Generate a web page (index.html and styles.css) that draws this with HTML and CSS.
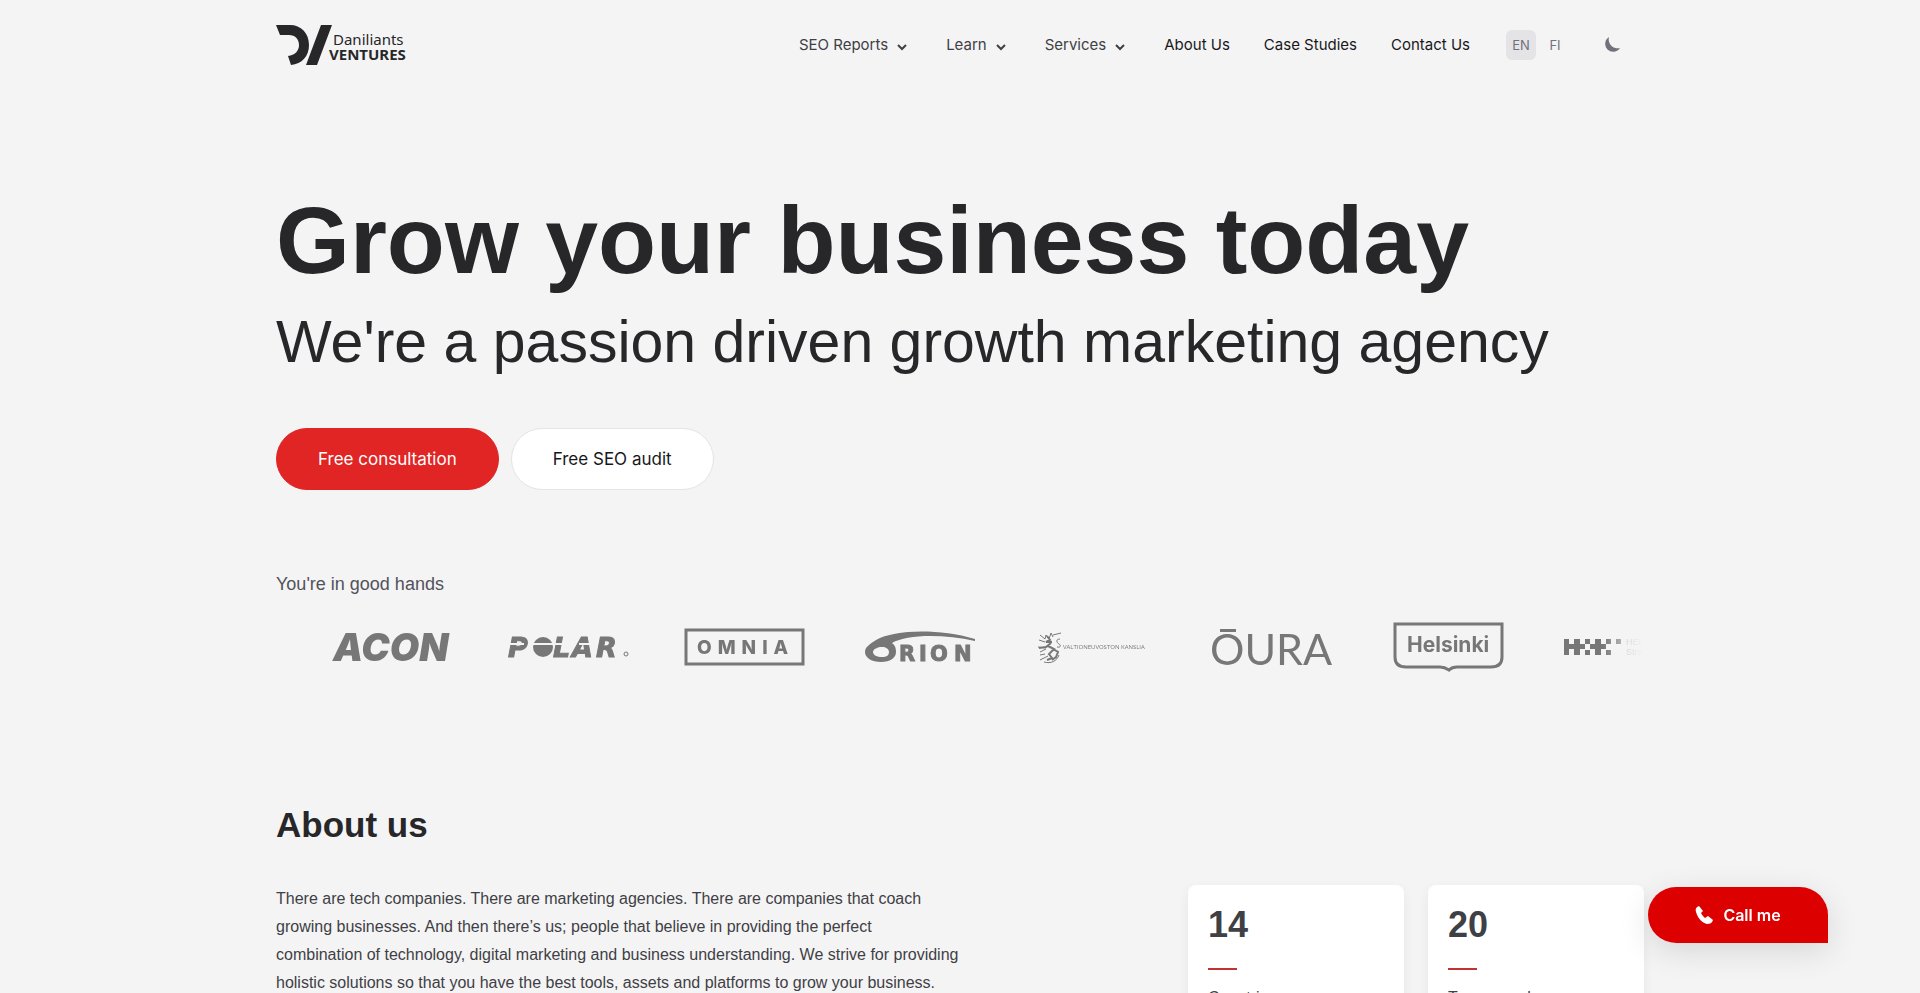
FILE: index.html
```
<!DOCTYPE html>
<html lang="en">

<head>
    <meta charset="UTF-8">
    <meta name="viewport" content="width=device-width, initial-scale=1.0">
    <title>Daniliants Ventures</title>
    <link rel="stylesheet" href="styles.css">
</head>

<body>

    <header class="header container">
        <a class="brand" href="#" aria-label="Daniliants Ventures">
            <svg width="132" height="40" viewBox="0 0 132 40">
                <path d="M0 0h14C25 0 33 8 33 20c0 11-7 19-18 20l-3-9c7-1 11-5 11-11 0-6-4-10-10-10H4z" />
                <path d="M45 0h11L41 40H30z" />
                <text class="brand-top" x="57" y="20">Daniliants</text>
                <text class="brand-bottom" x="53" y="35">VENTURES</text>
            </svg>
        </a>

        <nav class="nav">
            <button class="nav-item" type="button">SEO Reports
                <svg width="20" height="20" viewBox="0 0 20 20"><path d="M6 9l4 4 4-4" /></svg>
            </button>
            <button class="nav-item" type="button">Learn
                <svg width="20" height="20" viewBox="0 0 20 20"><path d="M6 9l4 4 4-4" /></svg>
            </button>
            <button class="nav-item" type="button">Services
                <svg width="20" height="20" viewBox="0 0 20 20"><path d="M6 9l4 4 4-4" /></svg>
            </button>
            <a class="nav-link" href="#about">About Us</a>
            <a class="nav-link" href="#">Case Studies</a>
            <a class="nav-link" href="#">Contact Us</a>
        </nav>

        <div class="languages">
            <a class="language active" href="#">EN</a>
            <a class="language" href="#">FI</a>
        </div>

        <button class="theme" type="button" aria-label="Dark mode">
            <svg width="16" height="16" viewBox="0 0 16 16"><path d="M5 0a8 8 0 1 0 11 11A9 9 0 0 1 5 0z" /></svg>
        </button>
    </header>

    <main class="container">
        <section class="hero">
            <h1>Grow your business today</h1>
            <p class="lead">We're a passion driven growth marketing agency</p>
            <div class="actions">
                <a class="button primary" href="#">Free consultation</a>
                <a class="button secondary" href="#">Free SEO audit</a>
            </div>
        </section>

        <section class="clients">
            <p class="clients-title">You're in good hands</p>
            <div class="logos">
                <svg class="logo" viewBox="0 0 120 56">
                    <text class="acon" x="1" y="42">ACON</text>
                </svg>
                <svg class="logo" viewBox="0 0 120 56">
                    <text class="polar" x="0 45 64 88" y="38">PLAR</text>
                    <circle cx="35" cy="28" r="10" />
                    <path class="cut" d="M24 24h40v2H24zM0 24h16v2H0zM71 24h19v2H71z" />
                    <circle class="thin" cx="118" cy="35" r="2" />
                </svg>
                <svg class="logo" viewBox="0 0 120 56">
                    <path class="frame" d="M2 11h117v34H2z" />
                    <text class="omnia" x="13" y="35">OMNIA</text>
                </svg>
                <svg class="logo" viewBox="0 0 120 56">
                    <path fill-rule="evenodd" d="M5 33c0-5 5-8 11-12C34 11 77 9 115 20v2C84 15 47 15 32 24c3 2 4 5 4 9 0 6-6 10-15 10S5 39 5 33zm8 0c0 3 4 5 9 5s7-2 7-5-3-5-7-5-9 2-9 5z" />
                    <text class="orion" x="39 59 70 94" y="42">RION</text>
                </svg>
                <svg class="logo" viewBox="0 0 120 56">
                    <path class="lion" d="M4 16l5 4 1-4 3 4 2-6 2 4M3 21l6 2M17 16l8-2M2 28l8 1M4 33l6-3M4 41l8-4M8 43c7 2 13-1 15-7M24 20c-5 0-3 4-1 5s2 4-2 3M4 36l5-1" />
                    <path class="lion body" d="M11 17l3 4-4 2h6M12 27l6 3-5 5 3 4-5 2M17 30l5 3-2 5-4 3M3 29l7-1 5-4" />
                    <text class="kanslia" x="27" y="30">VALTIONEUVOSTON KANSLIA</text>
                </svg>
                <svg class="logo" viewBox="0 0 120 56">
                    <path d="M8 10h16v3H8z" />
                    <text class="oura" x="-2" y="46">OURA</text>
                </svg>
                <svg class="logo" viewBox="0 0 120 56">
                    <path class="frame" d="M7 5h107v33c0 7-4 10-11 10H69c-4 0-6 1-8 3-3-2-5-3-9-3H18C11 48 7 45 7 38z" />
                    <text class="helsinki" x="19" y="33">Helsinki</text>
                </svg>
                <svg class="logo" viewBox="0 0 120 56">
                    <path d="M0 20h5v5h5v-5h6v5h5v5h-5v6h-6v-6H5v6H0zM21 20h5v5h-5zM21 31h5v5h-5zM26 25h5v-5h6v5h5v5h-5v6h-6v-6h-5zM42 20h5v5h-5zM42 31h5v5h-5zM52 20h5v5h-5z" />
                    <text class="strategy" x="62" y="26">HELSINKI</text>
                    <text class="strategy" x="62" y="36">Strategy</text>
                </svg>
            </div>
        </section>

        <section id="about">
            <h2>About us</h2>
            <div class="about">
                <p class="about-text">There are tech companies. There are marketing agencies. There are companies that coach growing businesses. And then there’s us; people that believe in providing the perfect combination of technology, digital marketing and business understanding. We strive for providing holistic solutions so that you have the best tools, assets and platforms to grow your business.</p>
                <div class="stats">
                    <div class="card">
                        <strong>14</strong>
                        <span>Countries</span>
                    </div>
                    <div class="card">
                        <strong>20</strong>
                        <span>Team members</span>
                    </div>
                </div>
            </div>
        </section>
    </main>

    <button class="call" type="button">
        <svg width="18" height="18" viewBox="0 0 18 18"><path d="M4 0C1 1 0 3 1 6c2 6 5 10 11 12 3 0 5-1 6-4l-5-4-3 2C8 10 7 9 6 7l2-2z" /></svg>
        Call me
    </button>

</body>

</html>
```
FILE: styles.css
```
* {
    box-sizing: border-box;
}

body {
    margin: 0;
    background-color: #f4f4f4;
    color: #27272a;
    font-family: "Liberation Sans", Arial, sans-serif;
    font-size: 16px;
    line-height: 28px;
}

h1, h2, p {
    margin: 0;
}

a {
    color: inherit;
    text-decoration: none;
}

button {
    padding: 0;
    border: none;
    background: none;
    cursor: pointer;
}

.container {
    max-width: 1400px;
    margin: 0 auto;
    padding: 0 16px;
}

/* Header */
.header {
    display: flex;
    align-items: center;
    height: 90px;
}

.brand {
    display: flex;
    margin-right: auto;
}

.brand svg {
    fill: #27272a;
    overflow: visible;
}

.brand-top,
.brand-bottom {
    font-family: "Noto Sans", sans-serif;
    font-size: 15px;
}

.brand-bottom {
    font-weight: 700;
}

.nav {
    display: flex;
    align-items: center;
    gap: 34px;
    margin-right: 36px;
}

.nav-item,
.nav-link {
    font-family: Inter, sans-serif;
    font-size: 15px;
    line-height: 24px;
    color: #18181b;
}

.nav-item {
    display: flex;
    align-items: center;
    gap: 4px;
    color: #3f3f46;
}

.nav-item svg {
    margin-top: 2px;
}

.nav-item path {
    fill: none;
    stroke: #3f3f46;
    stroke-width: 2;
}

.languages {
    display: flex;
    gap: 4px;
    margin-right: 31px;
}

.language {
    width: 30px;
    border-radius: 6px;
    font-family: Inter, sans-serif;
    font-size: 13px;
    line-height: 30px;
    text-align: center;
    color: #71717a;
}

.language.active {
    background-color: #e4e4e7;
}

.theme {
    display: flex;
    padding: 0 24px 0 3px;
}

.theme svg {
    fill: #71717a;
}

/* Hero */
.hero {
    padding-top: 102px;
}

h1 {
    font-size: 95px;
    line-height: 96px;
}

.lead {
    margin-top: 9px;
    font-size: 59px;
    line-height: 90px;
}

.actions {
    display: flex;
    gap: 12px;
    margin-top: 41px;
}

.button {
    padding: 0 41px;
    border: 1px solid #e12525;
    border-radius: 31px;
    font-family: Inter, sans-serif;
    font-size: 17px;
    line-height: 60px;
}

.primary {
    background-color: #e12525;
    color: #fff;
}

.secondary {
    border-color: #e4e4e7;
    background-color: #fff;
    color: #18181b;
}

/* Client logos */
.clients {
    padding-top: 80px;
}

.clients-title {
    font-size: 18px;
    color: #52525b;
}

.logos {
    display: flex;
    gap: 56px;
    margin-top: 21px;
    padding-left: 56px;
    overflow: hidden;
    -webkit-mask-image: linear-gradient(to right, transparent, #000 3%, #000 97%, transparent);
    mask-image: linear-gradient(to right, transparent, #000 3%, #000 97%, transparent);
}

.logo {
    flex: none;
    width: 120px;
    height: 56px;
    fill: #777;
    overflow: visible;
}

.logo .cut {
    fill: #f4f4f4;
}

.frame,
.thin,
.lion {
    fill: none;
    stroke: #777;
}

.frame {
    stroke-width: 3;
}

.lion.body {
    stroke-width: 2;
}

.acon,
.omnia,
.helsinki {
    font-family: Inter, sans-serif;
}

.polar,
.orion {
    font-family: "DejaVu Sans", sans-serif;
    font-weight: 700;
    stroke: #777;
    stroke-width: 1px;
}

.acon {
    font-size: 38px;
    font-style: italic;
    font-weight: 900;
}

.polar {
    font-size: 27px;
    font-style: italic;
}

.omnia {
    font-size: 19px;
    font-weight: 800;
    letter-spacing: 6px;
}

.orion {
    font-size: 21px;
}

.kanslia {
    font-family: "Open Sans", sans-serif;
    font-size: 6px;
}

.oura {
    font-family: Lato, sans-serif;
    font-size: 43px;
}

.helsinki {
    font-size: 21px;
    font-weight: 700;
}

.strategy {
    font-size: 9px;
    opacity: 0.5;
}

/* About */
h2 {
    padding-top: 130px;
    font-size: 35px;
    line-height: 40px;
}

.about {
    display: flex;
    justify-content: space-between;
    align-items: flex-start;
    margin-top: 40px;
}

.about-text {
    width: 50%;
    color: #3f3f46;
}

.stats {
    display: grid;
    grid-template-columns: 216px 216px;
    gap: 24px;
}

.card {
    display: flex;
    flex-direction: column;
    padding: 20px;
    border-radius: 8px;
    background-color: #fff;
    box-shadow: 0 4px 12px rgba(0, 0, 0, 0.06);
    color: #3f3f46;
}

.card strong {
    font-size: 36px;
    line-height: 40px;
}

.card strong::after {
    content: "";
    display: block;
    width: 29px;
    height: 2px;
    margin: 23px 0 14px;
    background-color: #c53030;
}

/* Call button */
.call {
    position: fixed;
    right: 92px;
    bottom: 50px;
    display: flex;
    justify-content: center;
    align-items: center;
    gap: 10px;
    width: 180px;
    height: 56px;
    border-radius: 28px 28px 0 28px;
    background-color: #d00;
    box-shadow: 0 8px 32px rgba(0, 0, 0, 0.12);
    font-family: Inter, sans-serif;
    font-size: 16px;
    font-weight: 600;
    color: #fff;
}

.call svg {
    fill: #fff;
}
```
